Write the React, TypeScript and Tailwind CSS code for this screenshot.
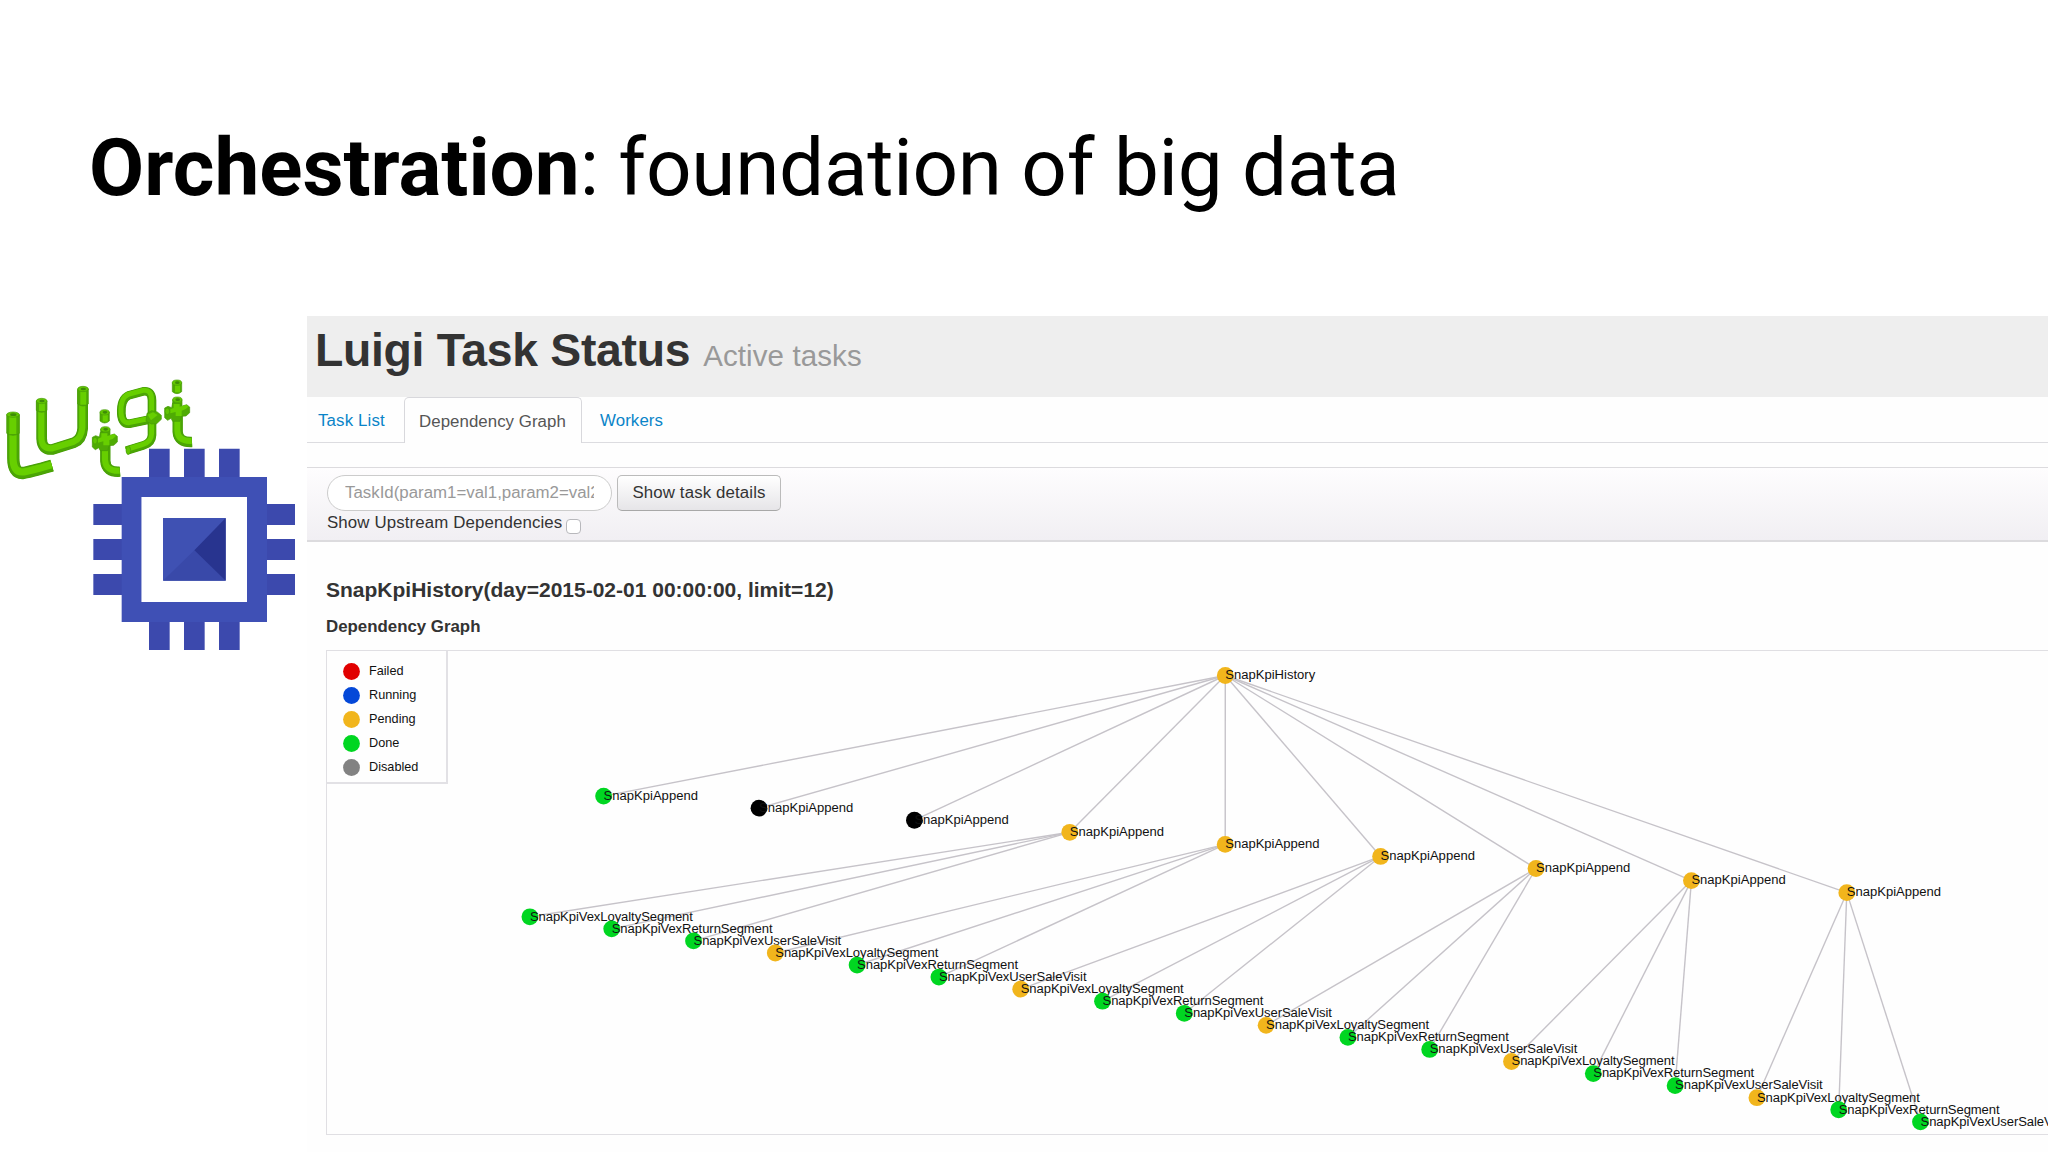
import { Fragment } from 'react'

type Status = 'failed' | 'running' | 'pending' | 'done' | 'disabled' | 'unknown'

interface GraphNode {
  label: string
  status: Status
  x: number
  y: number
  parent?: number
}

const statusColors: Record<Status, string> = {
  failed: '#e10000',
  running: '#0448d8',
  pending: '#f1b51c',
  done: '#00d621',
  disabled: '#828282',
  unknown: '#000000',
}

const legend: { label: string; status: Status }[] = [
  { label: 'Failed', status: 'failed' },
  { label: 'Running', status: 'running' },
  { label: 'Pending', status: 'pending' },
  { label: 'Done', status: 'done' },
  { label: 'Disabled', status: 'disabled' },
]

const appendStatuses: Status[] = [
  'done', 'unknown', 'unknown', 'pending', 'pending', 'pending', 'pending', 'pending', 'pending',
]

const segmentLabels = ['SnapKpiVexLoyaltySegment', 'SnapKpiVexReturnSegment', 'SnapKpiVexUserSaleVisit']

// Coordinates are relative to the graph box
const root: GraphNode = { label: 'SnapKpiHistory', status: 'pending', x: 898.3, y: 24.5 }

const appends: GraphNode[] = appendStatuses.map((status, i) => ({
  label: 'SnapKpiAppend',
  status,
  x: 276.6 + i * 155.4,
  y: 145.1 + i * 12.07,
}))

const segments: GraphNode[] = Array.from({ length: 18 }, (_, i) => ({
  label: segmentLabels[i % 3],
  status: i >= 3 && i % 3 === 0 ? 'pending' : 'done',
  x: 202.9 + i * 81.8,
  y: 265.8 + i * 12.06,
  parent: 3 + Math.floor(i / 3),
}))

function Pipe({ d, width = 30 }: { d: string; width?: number }) {
  return (
    <g fill="none" strokeLinejoin="round">
      <path d={d} stroke="#459b06" strokeWidth={width + 2} />
      <path d={d} stroke="#4ba505" strokeWidth={width - 1} />
      <path d={d} stroke="#67cf00" strokeWidth={width * 0.62} transform="translate(-1 -3)" />
    </g>
  )
}

function Cap({ x, y, h = 26, w = 32 }: { x: number; y: number; h?: number; w?: number }) {
  return (
    <g>
      <path
        d={`M${x - w / 2} ${y}v${h}q${w / 2} 12 ${w} 0v${-h}z`}
        fill="#4fa904"
        stroke="#459b06"
        strokeWidth="2"
      />
      <rect x={x - w / 2 + 8} y={y} width={w * 0.55} height={h + 2} fill="#67cf00" />
      <ellipse cx={x} cy={y} rx={w / 2} ry="8" fill="#62c602" stroke="#459b06" strokeWidth="2" />
      <ellipse cx={x + 1} cy={y} rx={w / 4} ry="4" fill="#3e8c07" />
    </g>
  )
}

function Joint({ x, y }: { x: number; y: number }) {
  return (
    <g>
      <path
        d={`M${x - 37} ${y - 8}l10 -5l11 4l3 -14h24l2 10l16 -5l9 7v17l-11 10l-14 1l-4 15h-22l-5 -9l-10 6l-9 -8z`}
        fill="#4fab04"
        stroke="#459b06"
        strokeWidth="2"
      />
      <path d={`M${x - 20} ${y - 4}l10 -4v-12h18v8l20 -6l6 6q-8 10 -20 12v16h-18v-12l-16 4z`} fill="#67cf00" />
      <ellipse cx={x - 29} cy={y + 2} rx="7" ry="10" fill="#60c402" stroke="#459b06" strokeWidth="2" />
    </g>
  )
}

function Logos() {
  return (
    <svg className="mt-[44px] block h-[300px] w-[307px] shrink-0" viewBox="0 0 921 900">
      <Pipe width={35} d="M40 165V295Q40 340 68 339Q86 337 156 317" />
      <Cap x={39} y={164} h={56} w={38} />
      <Pipe d="M125 125V236Q126 272 158 268L222 248Q246 238 248 205V90" />
      <Cap x={125} y={123} h={28} />
      <Cap x={249} y={87} h={45} />

      <Pipe d="M316 235V303Q318 338 360 335" width={29} />
      <Cap x={314} y={157} h={26} w={28} />
      <Cap x={316} y={208} h={18} w={28} />
      <Joint x={314} y={240} />

      <Pipe
        d="M456 177L388 191Q366 193 364 161Q362 117 386 106L430 94Q455 91 456 121V225Q455 249 430 256L379 272"
        width={24}
      />
      <path d="M441 160l14 -8l17 4l12 10v12l-14 13l-16 1l-16 -9z" fill="#52b003" stroke="#459b06" strokeWidth="2" />
      <path d="M443 164l16 -7l14 8l-20 16z" fill="#67cf00" />
      <ellipse cx="385" cy="271" rx="7" ry="12" fill="#60c402" stroke="#459b06" strokeWidth="2" />

      <Pipe d="M533 145V215Q535 248 576 246" width={29} />
      <Cap x={531} y={68} h={27} w={28} />
      <Cap x={532} y={119} h={18} w={28} />
      <Joint x={531} y={152} />

      {/* Chip */}
      <g fill="#3c49ad">
        <path d="M447 266h62v90h-62zM552 266h62v90h-62zM657 266h62v90h-62z" />
        <path d="M447 780h62v90h-62zM552 780h62v90h-62zM657 780h62v90h-62z" />
        <path d="M280 432h90v63h-90zM280 537h90v63h-90zM280 642h90v63h-90z" />
        <path d="M796 432h89v63h-89zM796 537h89v63h-89zM796 642h89v63h-89z" />
      </g>
      <path d="M365 351h436v435H365zM425 411v315h316V411z" fill="#3f50b5" fillRule="evenodd" />
      <rect x="425" y="411" width="316" height="315" fill="#fff" />
      <rect x="489" y="474" width="188" height="188" fill="#3f51b3" />
      <path d="M489 662L583 571L677 662z" fill="#3949a9" />
      <path d="M677 474L583 571L677 662z" fill="#28348f" />
    </svg>
  )
}

function Edge({ from, to }: { from: GraphNode; to: GraphNode }) {
  return <line x1={from.x} y1={from.y} x2={to.x} y2={to.y} stroke="#c6c3c9" strokeWidth="1.4" />
}

function DependencyGraph() {
  return (
    <svg className="block h-[483px] w-[1722px]" viewBox="0 0 1722 483">
      {appends.map((node, i) => (
        <Edge key={i} from={root} to={node} />
      ))}
      {segments.map((node, i) => (
        <Edge key={i} from={appends[node.parent!]} to={node} />
      ))}
      {[root, ...appends, ...segments].map((node, i) => (
        <Fragment key={i}>
          <circle cx={node.x} cy={node.y} r="8.4" fill={statusColors[node.status]} />
          <text
            x={node.x}
            y={node.y + 3.8}
            fontSize="13.05"
            fill="#111"
            className={node.parent === undefined ? 'tracking-normal' : 'tracking-[-0.07px]'}
          >
            {node.label}
          </text>
        </Fragment>
      ))}
    </svg>
  )
}

export default function App() {
  return (
    <div className="flex h-[1152px] w-[2048px] flex-col overflow-hidden bg-white font-['Liberation_Sans',Arial,sans-serif] text-[16.85px] text-[#333]">
      <h1 className="h-[316px] shrink-0 pt-[121px] pl-[89px] font-[Roboto,sans-serif] text-[80px] leading-[94px] tracking-[-0.24px] whitespace-nowrap text-black">
        <b className="font-bold tracking-normal">Orchestration</b>: foundation of big data
      </h1>

      <div className="flex flex-1">
        <Logos />

        <main className="w-[1741px] shrink-0 bg-[#fefefe]">
          <header className="flex h-[81px] items-baseline gap-[13px] bg-[#eeeeee] pl-[8px] leading-[68px] whitespace-nowrap">
            <h2 className="text-[46.35px] font-bold tracking-[-0.3px]">Luigi Task Status</h2>
            <small className="text-[29.5px] tracking-[0.1px] text-[#999]">Active tasks</small>
          </header>

          <nav className="flex h-[46px] leading-[47px] whitespace-nowrap">
            <a className="w-[97px] border-b-[1.5px] border-[#dcdce0] pl-[11px] tracking-[0.15px] text-[#0a84c8]">
              Task List
            </a>
            <a className="w-[178px] rounded-t-[5px] border-x border-t border-[#d8d8dc] pl-[14px] tracking-[0.05px] text-[#555]">
              Dependency Graph
            </a>
            <a className="flex-1 border-b border-[#dcdce0] pl-[18px] tracking-[0.1px] text-[#0a84c8]">Workers</a>
          </nav>

          <form className="mt-[24px] h-[75px] border-t border-b-2 border-[#dcdbde] bg-linear-to-b from-[#fefdfe] to-[#f1eff3] pt-[7px] pl-[20px]">
            <div className="flex gap-[5px]">
              <div className="h-9 w-[285px] rounded-full border-[1.5px] border-[#ccc] bg-white px-[17px] leading-[34px] text-[#999]">
                <div className="overflow-hidden whitespace-nowrap">TaskId(param1=val1,param2=val2)</div>
              </div>
              <button
                type="button"
                className="h-9 w-[164px] rounded-[5px] border border-[#bbb] border-b-[#a8a8a8] bg-linear-to-b from-white to-[#e6e5e8] leading-[34px] tracking-[0.12px] whitespace-nowrap"
              >
                Show task details
              </button>
            </div>
            <label className="flex leading-[24px] tracking-[0.12px] whitespace-nowrap">
              Show Upstream Dependencies
              <span className="mt-[8px] ml-[4px] h-[15px] w-[15px] rounded-[4px] border border-[#b8b8bc] bg-white" />
            </label>
          </form>

          <section className="pl-[19px]">
            <h4 className="mt-[35px] text-[21px] leading-[26px] font-bold whitespace-nowrap">
              SnapKpiHistory(day=2015-02-01 00:00:00, limit=12)
            </h4>
            <h5 className="mt-[12px] text-[16.85px] leading-[24px] font-bold whitespace-nowrap">Dependency Graph</h5>

            <div className="relative mt-[11px] h-[485px] border-y-[1.5px] border-l-[1.5px] border-[#e0dfe3]">
              <DependencyGraph />
              <ul className="absolute top-0 left-0 flex h-[133px] w-[121px] flex-col gap-[4px] border-r-2 border-b-2 border-[#e2e1e5] bg-[#fefefe] pt-[10px] pl-[16px] text-[12.7px] leading-[20px] text-[#111]">
                {legend.map((item) => (
                  <li key={item.status} className="flex h-[20px] items-center gap-[9px]">
                    <svg className="h-[17px] w-[17px]" viewBox="0 0 17 17">
                      <circle cx="8.5" cy="8.5" r="8.4" fill={statusColors[item.status]} />
                    </svg>
                    {item.label}
                  </li>
                ))}
              </ul>
            </div>
          </section>
        </main>
      </div>
    </div>
  )
}
